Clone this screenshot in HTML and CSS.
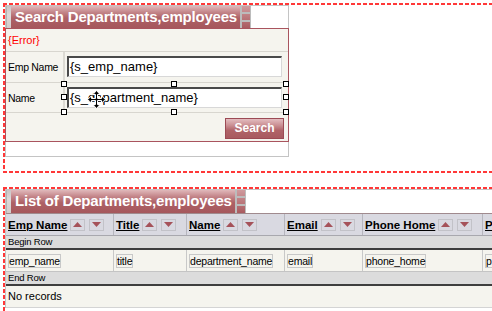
FILE: index.html
```html
<!DOCTYPE html>
<html lang="en">
<head>
    <meta charset="UTF-8">
    <title>Departments, employees</title>
    <link rel="stylesheet" href="styles.css">
</head>
<body>
    <div class="zone zone-search">
        <div class="record">
            <div class="caption">
                <span class="cap-left"></span>
                <span class="caption-text">Search Departments,employees</span>
                <span class="cap-right"></span>
            </div>
            <div class="panel">
                <div class="error-row">{Error}</div>
                <div class="field-row">
                    <div class="label">Emp Name</div>
                    <div class="control"><div class="input">{s_emp_name}</div></div>
                </div>
                <div class="field-row short">
                    <div class="label">Name</div>
                    <div class="control"><div class="input">{s_department_name}</div></div>
                </div>
                <div class="button-row">
                    <span class="btn">Search</span>
                </div>
            </div>

            <!-- designer selection around the Name field -->
            <div class="selection">
                <span class="handle tl"></span>
                <span class="handle tm"></span>
                <span class="handle tr"></span>
                <span class="handle ml"></span>
                <span class="handle mr"></span>
                <span class="handle bl"></span>
                <span class="handle bm"></span>
                <span class="handle br"></span>
            </div>
            <svg class="move-cursor" width="19" height="19" viewBox="0 0 19 19">
                <path d="M9.5 0.5 L13 4.5 H10.5 V8.5 H14.5 V6 L18.5 9.5 L14.5 13 V10.5 H10.5 V14.5 H13 L9.5 18.5 L6 14.5 H8.5 V10.5 H4.5 V13 L0.5 9.5 L4.5 6 V8.5 H8.5 V4.5 H6 Z" fill="#000" stroke="#fff" stroke-width="1"/>
            </svg>
        </div>
    </div>

    <div class="zone zone-list">
        <div class="grid">
            <div class="caption tall">
                <span class="cap-left"></span>
                <span class="caption-text">List of Departments,employees</span>
                <span class="cap-right"></span>
            </div>

            <div class="row head">
                <div class="hcell"><span class="sorter">Emp Name</span><span class="sort"><svg width="9" height="5"><polygon points="0,5 4.5,0 9,5" fill="#a5525a"/></svg></span><span class="sort"><svg width="9" height="5"><polygon points="0,0 9,0 4.5,5" fill="#a5525a"/></svg></span></div>
                <div class="hcell"><span class="sorter">Title</span><span class="sort"><svg width="9" height="5"><polygon points="0,5 4.5,0 9,5" fill="#a5525a"/></svg></span><span class="sort"><svg width="9" height="5"><polygon points="0,0 9,0 4.5,5" fill="#a5525a"/></svg></span></div>
                <div class="hcell"><span class="sorter">Name</span><span class="sort"><svg width="9" height="5"><polygon points="0,5 4.5,0 9,5" fill="#a5525a"/></svg></span><span class="sort"><svg width="9" height="5"><polygon points="0,0 9,0 4.5,5" fill="#a5525a"/></svg></span></div>
                <div class="hcell"><span class="sorter">Email</span><span class="sort"><svg width="9" height="5"><polygon points="0,5 4.5,0 9,5" fill="#a5525a"/></svg></span><span class="sort"><svg width="9" height="5"><polygon points="0,0 9,0 4.5,5" fill="#a5525a"/></svg></span></div>
                <div class="hcell"><span class="sorter">Phone Home</span><span class="sort"><svg width="9" height="5"><polygon points="0,5 4.5,0 9,5" fill="#a5525a"/></svg></span><span class="sort"><svg width="9" height="5"><polygon points="0,0 9,0 4.5,5" fill="#a5525a"/></svg></span></div>
                <div class="hcell"><span class="sorter">Phone Work</span></div>
            </div>

            <div class="band">Begin Row</div>

            <div class="row data">
                <div class="dcell"><span class="field">emp_name</span></div>
                <div class="dcell"><span class="field">title</span></div>
                <div class="dcell"><span class="field">department_name</span></div>
                <div class="dcell"><span class="field">email</span></div>
                <div class="dcell"><span class="field">phone_home</span></div>
                <div class="dcell"><span class="field">phone_work</span></div>
            </div>

            <div class="band">End Row</div>

            <div class="no-records">No records</div>
        </div>
    </div>
</body>
</html>
```

FILE: styles.css
```css
body {
    margin: 0;
    font-family: "Liberation Sans", Arial, sans-serif;
    font-size: 11px;
    color: #000;
    background: #fff;
    overflow: hidden;
}

/* dashed red design zones */
.zone {
    margin: 0 -20px 0 3px;
    padding: 2px 0 0 2px;
    box-sizing: border-box;
    background:
        repeating-linear-gradient(90deg, #ff3838 0 4px, transparent 4px 6px) 0 0 / 100% 2px no-repeat,
        repeating-linear-gradient(180deg, #ff3838 0 4px, transparent 4px 6px) 0 0 / 2px 100% no-repeat;
}

.zone-search {
    margin-top: 3px;
    height: 170px;
    background:
        repeating-linear-gradient(90deg, #ff3838 0 4px, transparent 4px 6px) 0 0 / 100% 2px no-repeat,
        repeating-linear-gradient(90deg, #ff3838 0 4px, transparent 4px 6px) 0 100% / 100% 2px no-repeat,
        repeating-linear-gradient(180deg, #ff3838 0 4px, transparent 4px 6px) 0 0 / 2px 100% no-repeat;
}

.zone-list {
    margin-top: 14px;
    min-height: 130px;
}

/* caption bar */
.caption {
    display: flex;
    height: 22px;
}

.caption.tall {
    height: 23px;
}

.cap-left {
    width: 5px;
    box-sizing: border-box;
    border-left: 1px solid #b4b4b4;
    background: linear-gradient(#c9c4c4, #dedada 40%, #d2cccc);
}

.caption-text {
    padding: 0 3px 0 4px;
    line-height: 22px;
    font-size: 15px;
    font-weight: bold;
    letter-spacing: -0.2px;
    color: #fff;
    background: linear-gradient(#e0b8ba 0%, #c4868a 28%, #ae6166 55%, #a5575c 100%);
}

.cap-right {
    width: 11px;
    box-sizing: border-box;
    border-left: 2px solid #bcbcbc;
    border-right: 1px solid #bcbcbc;
    background:
        linear-gradient(#bcbcbc, #bcbcbc) 0 6px / 100% 2px no-repeat,
        linear-gradient(#bcbcbc, #bcbcbc) 0 14px / 100% 2px no-repeat,
        linear-gradient(#cf9a9d, #a95a5f);
}

/* search record */
.record {
    position: relative;
    width: 284px;
    box-sizing: border-box;
    border: 1px solid #c4c4c4;
    padding-bottom: 14px;
    background: #fff;
}

.panel {
    margin: 0 -1px;
    border: 1px solid #a9545e;
    background: #f5f4ee;
}

.error-row {
    height: 22px;
    line-height: 22px;
    padding-left: 2px;
    color: #ff0000;
    border-bottom: 1px solid #d8d6cf;
}

.field-row {
    display: flex;
    height: 30px;
    border-bottom: 1px solid #d8d6cf;
}

.field-row.short {
    height: 29px;
}

.label {
    width: 55px;
    padding-left: 2px;
    display: flex;
    align-items: center;
    font-size: 10.5px;
    letter-spacing: -0.3px;
    border-right: 2px solid #dcdad3;
}

.control {
    flex: 1;
    padding: 4px 6px 0 2px;
}

.input {
    width: 215px;
    height: 21px;
    box-sizing: border-box;
    padding-left: 1px;
    border-top: 2px solid #4a4a4a;
    border-left: 2px solid #4a4a4a;
    border-right: 1px solid #d8d8d8;
    border-bottom: 1px solid #d8d8d8;
    background: #fff;
    font-size: 13px;
    line-height: 17px;
}

.button-row {
    display: flex;
    justify-content: flex-end;
    height: 28px;
    padding: 5px 4px 0 0;
    box-sizing: border-box;
}

.btn {
    width: 59px;
    height: 21px;
    box-sizing: border-box;
    border: 1px solid #9c4a54;
    background: linear-gradient(#e3bcbf 0%, #c98d91 35%, #b06368 60%, #a85a60 100%);
    color: #fff;
    font-weight: bold;
    font-size: 12px;
    line-height: 19px;
    text-align: center;
}

/* selection handles of the designer */
.selection {
    position: absolute;
    left: 55px;
    top: 75px;
    width: 228px;
    height: 34px;
}

.handle {
    position: absolute;
    width: 6px;
    height: 6px;
    box-sizing: border-box;
    border: 1px solid #000;
    background: #fff;
}

.tl { left: 0; top: 0; }
.tm { left: 110px; top: 0; }
.tr { right: 0; top: 0; }
.ml { left: 0; top: 13px; }
.mr { right: 0; top: 13px; }
.bl { left: 0; bottom: 0; }
.bm { left: 110px; bottom: 0; }
.br { right: 0; bottom: 0; }

.move-cursor {
    position: absolute;
    left: 81px;
    top: 84px;
}

/* list grid */
.grid {
    border-top: 1px solid #c4c4c4;
    border-left: 1px solid #c4c4c4;
}

.row {
    display: grid;
    grid-template-columns: 108px 73px 98px 78px 120px 1fr;
}

.head {
    box-sizing: border-box;
    height: 23px;
    border-top: 1px solid #a08a8e;
    border-bottom: 1px solid #a8a8ae;
    background: #d9d9e1;
}

.hcell {
    display: flex;
    align-items: center;
    padding-left: 2px;
    border-right: 1px solid #b6b6be;
    white-space: nowrap;
    overflow: hidden;
}

.sorter {
    font-weight: bold;
    font-size: 11.5px;
    text-decoration: underline;
}

.sort {
    width: 15px;
    height: 12px;
    box-sizing: border-box;
    margin-left: 4px;
    border: 1px solid #c2c2c8;
    display: flex;
    align-items: center;
    justify-content: center;
}

.sorter + .sort {
    margin-left: 3px;
}

.band {
    height: 12px;
    line-height: 12px;
    padding-left: 2px;
    font-size: 9.5px;
    letter-spacing: -0.2px;
    background: #dcdcdc;
    border-bottom: 2px solid #3e3e3e;
}

.data {
    height: 21px;
    background: #f5f4ee;
    border-bottom: 1px solid #c4c4c4;
}

.dcell {
    display: flex;
    align-items: center;
    padding-left: 2px;
    border-right: 1px solid #c8c8c8;
    white-space: nowrap;
    overflow: hidden;
}

.field {
    height: 14px;
    box-sizing: border-box;
    border: 1px solid #c8c8c8;
    font-size: 10.5px;
    letter-spacing: -0.2px;
    line-height: 12px;
}

.no-records {
    height: 21px;
    line-height: 21px;
    padding-left: 2px;
    background: #f5f4ee;
    border-bottom: 1px solid #d4d4d4;
}
```
